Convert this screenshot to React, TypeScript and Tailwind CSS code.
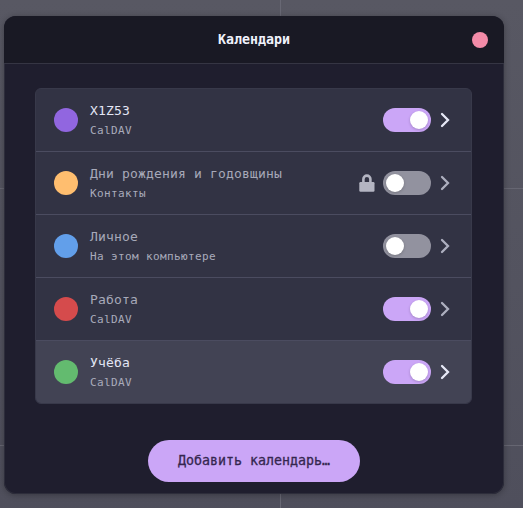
type Calendar = {
  name: string;
  source: string;
  color: string;
  on: boolean;
  bright?: boolean;
  locked?: boolean;
  active?: boolean;
};

const calendars: Calendar[] = [
  { name: "X1Z53", source: "CalDAV", color: "bg-[#9166e0]", on: true, bright: true },
  { name: "Дни рождения и годовщины", source: "Контакты", color: "bg-[#ffbe6f]", on: false, locked: true },
  { name: "Личное", source: "На этом компьютере", color: "bg-[#629fea]", on: false },
  { name: "Работа", source: "CalDAV", color: "bg-[#d54b4c]", on: true },
  { name: "Учёба", source: "CalDAV", color: "bg-[#63bb6f]", on: true, bright: true, active: true },
];

function Toggle({ on }: { on: boolean }) {
  return (
    <span className={`flex h-6 w-12 items-center rounded-full px-[3px] ${on ? "justify-end bg-[#cba6f7]" : "justify-start bg-[#92929f]"}`}>
      <span className="size-[18px] rounded-full bg-white shadow-[0_1px_3px_rgba(0,0,0,0.2)]" />
    </span>
  );
}

function Lock() {
  return (
    <svg width="16" height="18" viewBox="0 0 16 18" className="mr-2">
      <path d="M4.4 9V5.1a3.5 3.5 0 0 1 7 0V9" fill="none" stroke="#b4b5c2" strokeWidth="2.6" />
      <rect x="0.3" y="8" width="15.2" height="9.8" rx="1.2" fill="#b4b5c2" />
    </svg>
  );
}

function Row({ item, last }: { item: Calendar; last: boolean }) {
  return (
    <li
      className={`flex items-center pl-[18px] pr-[21px] ${last ? "h-[62px]" : "h-[63px] border-b border-[#4b4c60]"} ${item.active ? "bg-[#424354]" : ""}`}
    >
      <span className={`size-6 shrink-0 rounded-full ${item.color}`} />
      <div className="ml-3 flex grow flex-col whitespace-pre">
        <span className={`h-[20px] text-[13px] leading-[20px] tracking-[0.174px] ${item.bright ? "text-[#e3e6f5]" : "text-[#a7a9b9]"}`}>
          {item.name}
        </span>
        <span className="h-[19px] text-[11px] leading-[19px] tracking-[0.377px] text-[#a9abbb]">{item.source}</span>
      </div>
      {item.locked && <Lock />}
      <Toggle on={item.on} />
      <svg width="10" height="16" viewBox="0 0 10 16" className="ml-[9px]">
        <path
          d="M2 2 L8 8 L2 14"
          fill="none"
          stroke={item.bright ? "#e6e8f6" : "#adafbf"}
          strokeWidth="2.3"
          strokeLinecap="round"
          strokeLinejoin="miter"
        />
      </svg>
    </li>
  );
}

export default function App() {
  return (
    <div className="relative h-[508px] w-[523px] overflow-hidden bg-linear-to-b from-[#585863] to-[#4f4f5c] pl-1 pt-4 font-['DejaVu_Sans_Mono',monospace] antialiased">
      <div className="absolute left-[280px] top-0 h-full w-px bg-[#686874]" />
      <div className="absolute left-0 top-[188px] h-px w-full bg-[#666672]" />
      <div className="absolute left-0 top-[445px] h-px w-full bg-[#666672]" />
      <section className="relative flex h-[478px] w-[500px] flex-col overflow-hidden rounded-xl bg-[#1f1e2e] shadow-[0_1px_6px_rgba(0,0,0,0.3)] ring-1 ring-inset ring-[#2d2d3b]">
        <header className="relative flex h-12 shrink-0 items-center justify-center border-b border-[#353543] bg-[#191924]">
          <h1 className="pt-px text-[13.3px] font-bold leading-5 text-[#f0f2fc]">Календари</h1>
          <button aria-label="Закрыть" className="absolute right-4 top-4 size-4 rounded-full bg-[#f38ba8]" />
        </header>
        <ul className="ml-[31px] mt-6 w-[437px] overflow-hidden rounded-md border border-[#38394a] bg-[#323344]">
          {calendars.map((item, i) => (
            <Row key={item.name} item={item} last={i === calendars.length - 1} />
          ))}
        </ul>
        <button className="mt-9 flex h-[42px] w-[212px] items-center justify-center self-center rounded-full bg-[#cba6f7] pb-px text-[13.3px] text-[#35264f] [-webkit-text-stroke:0.3px_#35264f]">
          Добавить календарь…
        </button>
      </section>
    </div>
  );
}
